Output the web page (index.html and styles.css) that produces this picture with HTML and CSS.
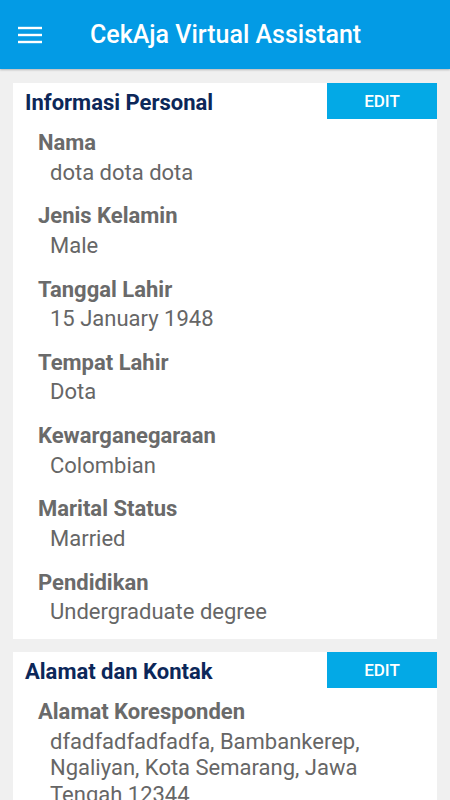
FILE: index.html
```html
<!DOCTYPE html>
<html>

<head>
    <title>CekAja Virtual Assistant</title>
    <link rel="stylesheet" href="styles.css">
</head>

<body>
    <div class="appbar">
        <svg class="menu" width="24" height="18" viewBox="0 0 24 18">
            <rect x="0" y="0.8" width="24" height="2.4" fill="#fff"/>
            <rect x="0" y="7.8" width="24" height="2.4" fill="#fff"/>
            <rect x="0" y="14.8" width="24" height="2.4" fill="#fff"/>
        </svg>
        <span class="title">CekAja Virtual Assistant</span>
    </div>

    <div class="card">
        <div class="card-head">
            <span class="card-title">Informasi Personal</span>
            <button class="edit">EDIT</button>
        </div>
        <div class="items">
            <div class="item">
                <div class="label">Nama</div>
                <div class="value">dota dota dota</div>
            </div>
            <div class="item">
                <div class="label">Jenis Kelamin</div>
                <div class="value">Male</div>
            </div>
            <div class="item">
                <div class="label">Tanggal Lahir</div>
                <div class="value">15 January 1948</div>
            </div>
            <div class="item">
                <div class="label">Tempat Lahir</div>
                <div class="value">Dota</div>
            </div>
            <div class="item">
                <div class="label">Kewarganegaraan</div>
                <div class="value">Colombian</div>
            </div>
            <div class="item">
                <div class="label">Marital Status</div>
                <div class="value">Married</div>
            </div>
            <div class="item">
                <div class="label">Pendidikan</div>
                <div class="value">Undergraduate degree</div>
            </div>
        </div>
    </div>

    <div class="card">
        <div class="card-head">
            <span class="card-title">Alamat dan Kontak</span>
            <button class="edit">EDIT</button>
        </div>
        <div class="items">
            <div class="item">
                <div class="label">Alamat Koresponden</div>
                <div class="value">dfadfadfadfadfa, Bambankerep, Ngaliyan, Kota Semarang, Jawa Tengah 12344</div>
            </div>
        </div>
    </div>
</body>

</html>
```

FILE: styles.css
```css
body {
    margin: 0;
    font-family: Roboto, "Liberation Sans", sans-serif;
    background-color: #f0f0f0;
    height: 800px;
    overflow: hidden;
}

.appbar {
    height: 69px;
    background-color: #039be5;
    display: flex;
    align-items: center;
    padding-left: 18px;
    box-shadow: 0 1px 2px rgba(0, 0, 0, 0.25);
}

.menu {
    display: block;
    margin-top: 1px;
}

.title {
    color: white;
    font-size: 25px;
    font-weight: 500;
    margin-left: 48px;
}

.card {
    background-color: white;
    margin: 14px 13px 0 13px;
    padding-bottom: 13px;
}

.card + .card {
    margin-top: 13px;
}

.card-head {
    display: flex;
    justify-content: space-between;
    align-items: center;
    height: 36px;
}

.card-title {
    color: #0c2759;
    font-size: 22px;
    font-weight: bold;
    padding-left: 12px;
    padding-top: 2px;
}

.edit {
    width: 110px;
    height: 36px;
    border: none;
    background-color: #03a9e6;
    color: white;
    font-family: Roboto, "Liberation Sans", sans-serif;
    font-size: 17px;
    font-weight: 500;
}

.items {
    padding: 11px 20px 0 25px;
}

.item {
    margin-bottom: 17px;
}

.item:last-child {
    margin-bottom: 0;
}

.label {
    color: #6a6a6a;
    font-size: 22px;
    font-weight: bold;
    line-height: 26px;
}

.value {
    color: #666;
    font-size: 22px;
    line-height: 26.7px;
    margin-top: 3.6px;
    padding-left: 12px;
}
```
